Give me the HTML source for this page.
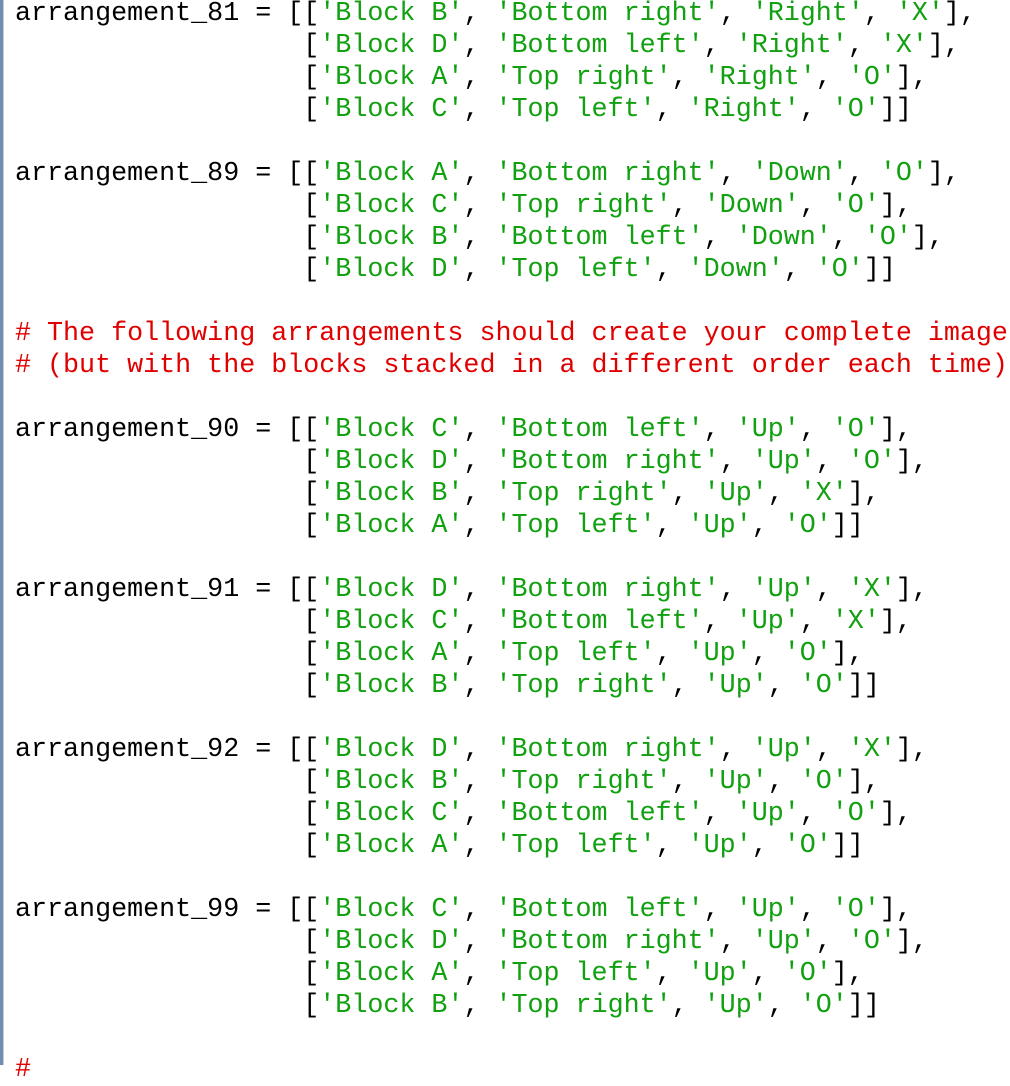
<!DOCTYPE html>
<html><head><meta charset="utf-8"><style>
html,body{margin:0;padding:0;background:#fff;width:1010px;height:1065px;overflow:hidden;}
.bar{position:absolute;left:0;top:0;width:3px;height:1065px;background:#6f8fb0;}
.bar2{position:absolute;left:3px;top:0;width:1px;height:1065px;background:#c8d0d8;}
pre{position:absolute;left:15px;top:-2px;margin:0;font-family:"Liberation Mono","Courier New",monospace;font-size:26.7px;line-height:32px;color:#000;}
.s{color:#10a010;}
.c{color:#e00000;}
</style></head><body>
<div class="bar"></div><div class="bar2"></div>
<pre>arrangement_81 = [[<span class="s">'Block B'</span>, <span class="s">'Bottom right'</span>, <span class="s">'Right'</span>, <span class="s">'X'</span>],
                  [<span class="s">'Block D'</span>, <span class="s">'Bottom left'</span>, <span class="s">'Right'</span>, <span class="s">'X'</span>],
                  [<span class="s">'Block A'</span>, <span class="s">'Top right'</span>, <span class="s">'Right'</span>, <span class="s">'O'</span>],
                  [<span class="s">'Block C'</span>, <span class="s">'Top left'</span>, <span class="s">'Right'</span>, <span class="s">'O'</span>]]

arrangement_89 = [[<span class="s">'Block A'</span>, <span class="s">'Bottom right'</span>, <span class="s">'Down'</span>, <span class="s">'O'</span>],
                  [<span class="s">'Block C'</span>, <span class="s">'Top right'</span>, <span class="s">'Down'</span>, <span class="s">'O'</span>],
                  [<span class="s">'Block B'</span>, <span class="s">'Bottom left'</span>, <span class="s">'Down'</span>, <span class="s">'O'</span>],
                  [<span class="s">'Block D'</span>, <span class="s">'Top left'</span>, <span class="s">'Down'</span>, <span class="s">'O'</span>]]

<span class="c"># The following arrangements should create your complete image</span>
<span class="c"># (but with the blocks stacked in a different order each time)</span>

arrangement_90 = [[<span class="s">'Block C'</span>, <span class="s">'Bottom left'</span>, <span class="s">'Up'</span>, <span class="s">'O'</span>],
                  [<span class="s">'Block D'</span>, <span class="s">'Bottom right'</span>, <span class="s">'Up'</span>, <span class="s">'O'</span>],
                  [<span class="s">'Block B'</span>, <span class="s">'Top right'</span>, <span class="s">'Up'</span>, <span class="s">'X'</span>],
                  [<span class="s">'Block A'</span>, <span class="s">'Top left'</span>, <span class="s">'Up'</span>, <span class="s">'O'</span>]]

arrangement_91 = [[<span class="s">'Block D'</span>, <span class="s">'Bottom right'</span>, <span class="s">'Up'</span>, <span class="s">'X'</span>],
                  [<span class="s">'Block C'</span>, <span class="s">'Bottom left'</span>, <span class="s">'Up'</span>, <span class="s">'X'</span>],
                  [<span class="s">'Block A'</span>, <span class="s">'Top left'</span>, <span class="s">'Up'</span>, <span class="s">'O'</span>],
                  [<span class="s">'Block B'</span>, <span class="s">'Top right'</span>, <span class="s">'Up'</span>, <span class="s">'O'</span>]]

arrangement_92 = [[<span class="s">'Block D'</span>, <span class="s">'Bottom right'</span>, <span class="s">'Up'</span>, <span class="s">'X'</span>],
                  [<span class="s">'Block B'</span>, <span class="s">'Top right'</span>, <span class="s">'Up'</span>, <span class="s">'O'</span>],
                  [<span class="s">'Block C'</span>, <span class="s">'Bottom left'</span>, <span class="s">'Up'</span>, <span class="s">'O'</span>],
                  [<span class="s">'Block A'</span>, <span class="s">'Top left'</span>, <span class="s">'Up'</span>, <span class="s">'O'</span>]]

arrangement_99 = [[<span class="s">'Block C'</span>, <span class="s">'Bottom left'</span>, <span class="s">'Up'</span>, <span class="s">'O'</span>],
                  [<span class="s">'Block D'</span>, <span class="s">'Bottom right'</span>, <span class="s">'Up'</span>, <span class="s">'O'</span>],
                  [<span class="s">'Block A'</span>, <span class="s">'Top left'</span>, <span class="s">'Up'</span>, <span class="s">'O'</span>],
                  [<span class="s">'Block B'</span>, <span class="s">'Top right'</span>, <span class="s">'Up'</span>, <span class="s">'O'</span>]]

<span class="c">#</span></pre>
</body></html>
